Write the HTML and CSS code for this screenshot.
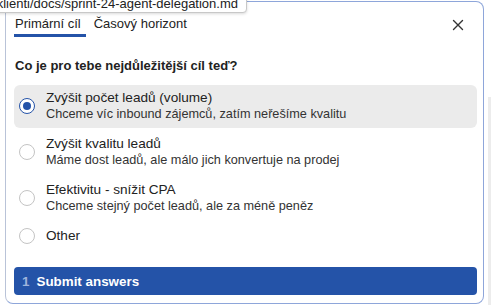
FILE: index.html
```html
<!DOCTYPE html>
<html lang="cs">
<head>
<meta charset="utf-8">
<link rel="stylesheet" href="styles.css">
</head>
<body>
<div class="tooltip">klienti/docs/sprint-24-agent-delegation.md</div>
<div class="edge"></div>
<div class="panel">
  <div class="header">
    <div class="tabs">
      <div class="tab active">Primární cíl</div>
      <div class="tab">Časový horizont</div>
    </div>
    <div class="close">
      <svg width="12" height="12" viewBox="0 0 12 12"><path d="M1.5 1.5 L10.5 10.5 M10.5 1.5 L1.5 10.5" stroke="#333" stroke-width="1.4" stroke-linecap="round" fill="none"/></svg>
    </div>
  </div>
  <div class="question">Co je pro tebe nejdůležitější cíl teď?</div>
  <div class="options">
    <div class="option selected">
      <span class="radio on"></span>
      <div class="text">
        <div class="title">Zvýšit počet leadů (volume)</div>
        <div class="desc">Chceme víc inbound zájemců, zatím neřešíme kvalitu</div>
      </div>
    </div>
    <div class="option">
      <span class="radio"></span>
      <div class="text">
        <div class="title">Zvýšit kvalitu leadů</div>
        <div class="desc">Máme dost leadů, ale málo jich konvertuje na prodej</div>
      </div>
    </div>
    <div class="option">
      <span class="radio"></span>
      <div class="text">
        <div class="title">Efektivitu - snížit CPA</div>
        <div class="desc">Chceme stejný počet leadů, ale za méně peněz</div>
      </div>
    </div>
    <div class="option">
      <span class="radio"></span>
      <div class="text">
        <div class="title">Other</div>
      </div>
    </div>
  </div>
  <button class="submit"><span class="num">1</span>Submit answers</button>
</div>
</body>
</html>
```
FILE: styles.css
```css
* { box-sizing: border-box; }
html, body {
  margin: 0;
  padding: 0;
  width: 491px;
  height: 305px;
  overflow: hidden;
  background: #fff;
  font-family: "Liberation Sans", Arial, sans-serif;
  color: #222;
}
body { position: relative; }
.panel {
  margin: 1px 0 0 5px;
  width: 479px;
  height: 303px;
  border: 1px solid #8ea6da;
  border-left-color: #b9c3d8;
  border-radius: 8px;
  padding: 0 6px 0 8px;
  display: flex;
  flex-direction: column;
}
.header {
  display: flex;
  justify-content: space-between;
  align-items: flex-start;
  padding-top: 14px;
}
.tabs { display: flex; gap: 7px; }
.tab {
  font-size: 13px;
  line-height: 15px;
  padding: 0 5px 3px 1px;
  border-bottom: 3px solid transparent;
  color: #222;
}
.tab.active { border-bottom-color: #2453a8; }
.close {
  margin-top: 3px;
  margin-right: 13px;
  width: 12px;
  height: 12px;
  display: flex;
}
.question {
  font-size: 13px;
  font-weight: bold;
  color: #222;
  margin-top: 21px;
  padding-left: 1px;
  line-height: 16px;
}
.options {
  margin-top: 11px;
  display: flex;
  flex-direction: column;
  gap: 3px;
}
.option {
  display: flex;
  align-items: center;
  padding: 4px 8px 5px 5px;
  border-radius: 6px;
}
.option.selected { background: #ebebeb; }
.radio {
  width: 16px;
  height: 16px;
  border-radius: 50%;
  border: 1px solid #c4c4c4;
  background: #fff;
  flex: none;
  margin-right: 11px;
  position: relative;
}
.radio.on {
  border: 1.5px solid #2453a8;
}
.radio.on::after {
  content: "";
  position: absolute;
  left: 50%;
  top: 50%;
  width: 8px;
  height: 8px;
  margin: -4px 0 0 -4px;
  border-radius: 50%;
  background: #2453a8;
}
.text { display: flex; flex-direction: column; }
.title { font-size: 13.6px; line-height: 17px; color: #222; }
.desc { font-size: 12.7px; line-height: 17px; color: #333; }
.submit {
  margin-top: 18px;
  height: 28px;
  border: none;
  border-radius: 4px;
  background: #2453a8;
  color: #fff;
  font-family: "Liberation Sans", Arial, sans-serif;
  font-size: 13.4px;
  font-weight: bold;
  text-align: left;
  padding: 0 8px;
  display: flex;
  align-items: center;
}
.num { color: #9fb3dc; margin-right: 7px; }
.tooltip {
  position: absolute;
  top: -8px;
  right: 244px;
  height: 21px;
  padding: 0 8px 0 8px;
  line-height: 21px;
  font-size: 13px;
  color: #222;
  background: #fff;
  border: 1px solid #c8c8c8;
  border-radius: 4px;
  box-shadow: 0 1px 3px rgba(0,0,0,0.15);
  white-space: nowrap;
  z-index: 2;
}
.edge {
  position: absolute;
  right: 0;
  top: 97px;
  width: 3px;
  bottom: 0;
  background: #ececec;
}
```
